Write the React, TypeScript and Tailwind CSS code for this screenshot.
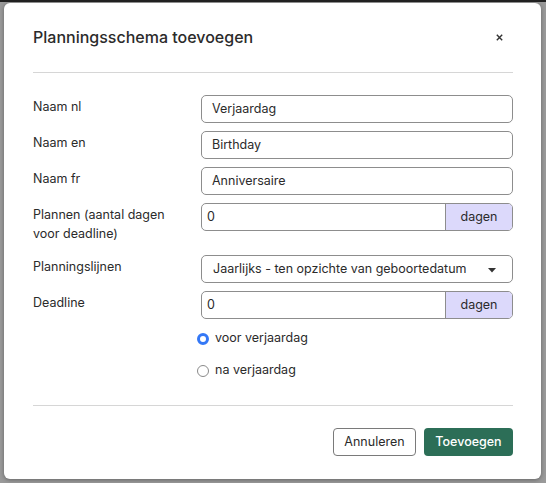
import { FC } from 'react';

const font = { fontFamily: 'Inter, "Noto Sans", sans-serif' };

const TextRow: FC<{ label: string; value: string }> = ({ label, value }) => (
    <div className="flex items-start">
        <label className="w-[168px] shrink-0 pt-0.5 text-[12.5px] leading-[19px] text-[#2b2b2b]">{label}</label>
        <div className="flex h-[28px] w-[312px] shrink-0 items-center rounded-[5px] border border-[#8d8d8d] bg-white px-[10px] text-[12.5px] text-[#2b2b2b]">
            {value}
        </div>
    </div>
);

const DaysRow: FC<{ label: React.ReactNode; value: string; extra?: string }> = ({ label, value, extra }) => (
    <div className={`flex items-start ${extra ?? ''}`}>
        <label className="w-[168px] shrink-0 pt-0.5 text-[12.5px] leading-[19px] text-[#2b2b2b]">{label}</label>
        <div className="flex h-[28px] w-[312px] shrink-0 overflow-hidden rounded-[5px] border border-[#8d8d8d] bg-white text-[12.5px] text-[#2b2b2b]">
            <div className="flex flex-1 items-center px-[5px]">{value}</div>
            <div className="flex w-[67px] items-center justify-center border-l border-[#8d8d8d] bg-[#dcd9fb]">dagen</div>
        </div>
    </div>
);

const App: FC = () => {
    return (
        <div className="h-[483px] w-[546px] overflow-hidden bg-[#9a9a9a]" style={font}>
            <div className="h-[2px] bg-[#222]"></div>
            <div className="pl-[4px] pt-[1px]">
                {/* Modal */}
                <div className="h-[476px] w-[537px] rounded-[6px] bg-white pl-[29px] pr-[28px] shadow-[0_1px_4px_rgba(0,0,0,0.35)]">
                    {/* Header */}
                    <div className="flex items-center justify-between pb-[23px] pt-[22px]">
                        <h2 className="text-[16px] font-medium leading-[24px] text-[#2b2b2b]">Planningsschema toevoegen</h2>
                        <svg width="7" height="7" viewBox="0 0 7 7" className="mr-[10px]">
                            <path d="M0.8 0.8 L6.2 6.2 M6.2 0.8 L0.8 6.2" stroke="#333" strokeWidth="1.4" />
                        </svg>
                    </div>
                    <div className="h-px bg-[#d6d6d6]"></div>

                    {/* Body */}
                    <div className="flex flex-col gap-2 pt-[22px]">
                        <TextRow label="Naam nl" value="Verjaardag" />
                        <TextRow label="Naam en" value="Birthday" />
                        <TextRow label="Naam fr" value="Anniversaire" />
                        <DaysRow label={<>Plannen (aantal dagen<br />voor deadline)</>} value="0" extra="pb-[4px]" />
                        <div className="flex items-start">
                            <label className="w-[168px] shrink-0 pt-0.5 text-[12.5px] leading-[19px] text-[#2b2b2b]">Planningslijnen</label>
                            <div className="flex h-[28px] w-[312px] shrink-0 items-center justify-between rounded-[5px] border border-[#8d8d8d] bg-white pl-[11px] pr-[16px] text-[12.5px] text-[#2b2b2b]">
                                <span>Jaarlijks - ten opzichte van geboortedatum</span>
                                <svg width="8" height="5" viewBox="0 0 8 5" className="mt-[3px]">
                                    <path d="M0 0 L8 0 L4 4.5 Z" fill="#333" />
                                </svg>
                            </div>
                        </div>
                        <DaysRow label="Deadline" value="0" />
                    </div>

                    {/* Radios */}
                    <div className="flex flex-col gap-[13px] pl-[164px] pt-[10px] text-[12.5px] text-[#2b2b2b]">
                        <label className="flex h-[19px] items-center gap-[6px]">
                            <span className="flex h-[12px] w-[12px] items-center justify-center rounded-full border-[3.5px] border-[#3478f6] bg-white"></span>
                            voor verjaardag
                        </label>
                        <label className="flex h-[19px] items-center gap-[6px]">
                            <span className="h-[12px] w-[12px] rounded-full border border-[#8a8a8a] bg-white"></span>
                            na verjaardag
                        </label>
                    </div>

                    <div className="mt-[25px] h-px bg-[#d6d6d6]"></div>

                    {/* Footer */}
                    <div className="flex justify-end gap-2 pt-[22px]">
                        <button className="h-[28px] w-[83px] rounded-[4px] border border-[#7a7a7a] bg-white text-[12.5px] text-[#2b2b2b]">Annuleren</button>
                        <button className="h-[28px] w-[89px] rounded-[4px] bg-[#2c6e57] text-[12.5px] font-medium text-white">Toevoegen</button>
                    </div>
                </div>
            </div>
        </div>
    );
};

export default App;
